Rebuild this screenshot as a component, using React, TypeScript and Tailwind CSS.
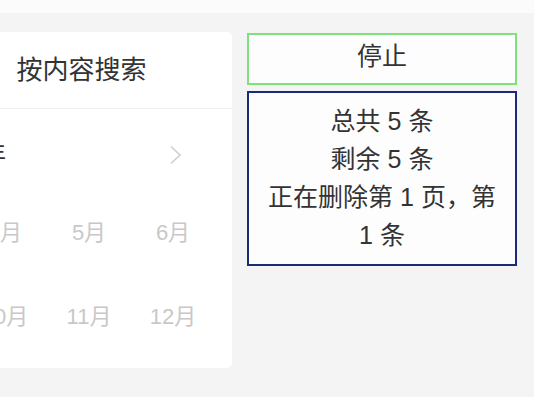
import React from 'react';

const months = ['4月', '5月', '6月', '10月', '11月', '12月'];

export default function App() {
  return (
    <div
      className="w-[534px] h-[397px] overflow-hidden bg-[#f4f4f4] text-[#333]"
      style={{ fontFamily: '"Liberation Sans", "Noto Sans CJK SC", sans-serif' }}
    >
      <div className="h-[13px] bg-[#fbfbfb]" />
      <div className="flex items-start pt-[19px]">
        {/* search card, partly off screen */}
        <div className="-ml-[69px] w-[301px] h-[336px] shrink-0 bg-white rounded-[5px] flex flex-col">
          <div className="h-[77px] flex items-center justify-center border-b border-[#f0f0f0] text-[26px]">
            按内容搜索
          </div>
          <div className="h-[81px] flex items-center justify-between pt-[10px] pl-[52px] pr-[50px]">
            <span className="text-[23px]">年</span>
            <svg width="13" height="20" viewBox="0 0 13 20" fill="none" stroke="#cfcfcf" strokeWidth="1.6">
              <path d="M2 1.5 L11 10 L2 18.5" />
            </svg>
          </div>
          <div className="grid grid-cols-3 pl-[32px] pr-[17px] text-[22px] text-[#c8c8c8]">
            {months.map((m) => (
              <div key={m} className="h-[84px] flex items-center justify-center">
                {m}
              </div>
            ))}
          </div>
        </div>

        {/* status column */}
        <div className="ml-[15px] w-[270px] flex flex-col gap-[6px] pt-[1px]">
          <div className="h-[52px] border-2 border-[#7ee27a] bg-[#fdfdfd] flex items-center justify-center text-[25px] pb-[4px]">
            停止
          </div>
          <div className="h-[175px] border-2 border-[#1c2a7a] bg-[#fdfdfd] flex flex-col items-center justify-center text-[25px] leading-[38px] text-center px-1 pb-[2px]">
            <div>总共 5 条</div>
            <div>剩余 5 条</div>
            <div>正在删除第 1 页，第</div>
            <div>1 条</div>
          </div>
        </div>
      </div>
    </div>
  );
}
